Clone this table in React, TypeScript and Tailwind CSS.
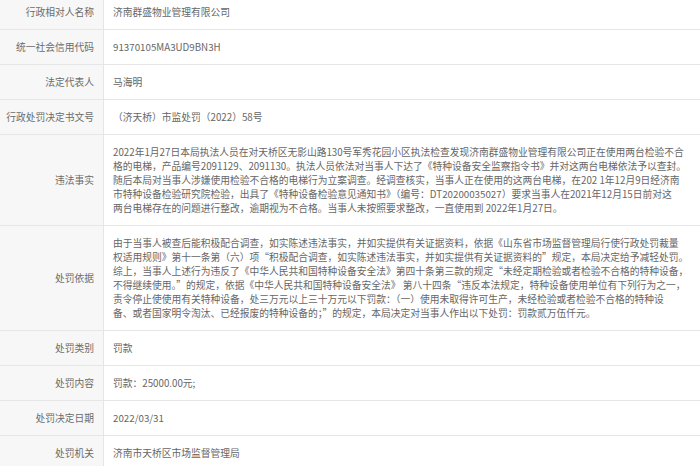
import React from 'react';

type Row = {
  label: string;
  lines: string[];
};

const rows: Row[] = [
  { label: '行政相对人名称', lines: ['济南群盛物业管理有限公司'] },
  { label: '统一社会信用代码', lines: ['91370105MA3UD9BN3H'] },
  { label: '法定代表人', lines: ['马海明'] },
  { label: '行政处罚决定书文号', lines: ['（济天桥）市监处罚（2022）58号'] },
  {
    label: '违法事实',
    lines: [
      '2022年1月27日本局执法人员在对天桥区无影山路130号军秀花园小区执法检查发现济南群盛物业管理有限公司正在使用两台检验不合',
      '格的电梯，产品编号2091129、2091130。执法人员依法对当事人下达了《特种设备安全监察指令书》并对这两台电梯依法予以查封。',
      '随后本局对当事人涉嫌使用检验不合格的电梯行为立案调查。经调查核实，当事人正在使用的这两台电梯，在202 1年12月9日经济南',
      '市特种设备检验研究院检验，出具了《特种设备检验意见通知书》（编号：DT20200035027）要求当事人在2021年12月15日前对这',
      '两台电梯存在的问题进行整改，逾期视为不合格。当事人未按照要求整改，一直使用到 2022年1月27日。',
    ],
  },
  {
    label: '处罚依据',
    lines: [
      '由于当事人被查后能积极配合调查，如实陈述违法事实，并如实提供有关证据资料，依据《山东省市场监督管理局行使行政处罚裁量',
      '权适用规则》第十一条第（六）项“积极配合调查，如实陈述违法事实，并如实提供有关证据资料的”规定，本局决定给予减轻处罚。',
      '综上，当事人上述行为违反了《中华人民共和国特种设备安全法》第四十条第三款的规定“未经定期检验或者检验不合格的特种设备，',
      '不得继续使用。”的规定，依据《中华人民共和国特种设备安全法》 第八十四条“违反本法规定，特种设备使用单位有下列行为之一，',
      '责令停止使使用有关特种设备，处三万元以上三十万元以下罚款：（一）使用未取得许可生产，未经检验或者检验不合格的特种设',
      '备、或者国家明令淘汰、已经报废的特种设备的；”的规定，本局决定对当事人作出以下处罚：罚款贰万伍仟元。',
    ],
  },
  { label: '处罚类别', lines: ['罚款'] },
  { label: '处罚内容', lines: ['罚款：25000.00元;'] },
  { label: '处罚决定日期', lines: ['2022/03/31'] },
  { label: '处罚机关', lines: ['济南市天桥区市场监督管理局'] },
];

const App: React.FC = () => {
  return (
    <div
      className="h-[466px] w-[700px] overflow-hidden bg-white text-[9.75px] text-[#666]"
      style={{ fontFamily: '"Noto Sans CJK SC", "Noto Sans", sans-serif' }}
    >
      <div className="-mt-[5px]">
        {rows.map((row) => (
          <div key={row.label} className="flex min-h-[35px] border-b border-[#e6e6e6]">
            <div className="flex w-[104px] shrink-0 items-center justify-end border-r border-[#e6e6e6] bg-[#f7f7f7] pr-[9px] text-[#6b6b6b]">
              {row.label}
            </div>
            <div className="flex flex-1 flex-col justify-center py-[10px] pl-[9px] pr-[8px] leading-[14px]">
              {row.lines.map((line, i) => (
                <div key={i} className="whitespace-pre">
                  {line}
                </div>
              ))}
            </div>
          </div>
        ))}
      </div>
    </div>
  );
};

export default App;
